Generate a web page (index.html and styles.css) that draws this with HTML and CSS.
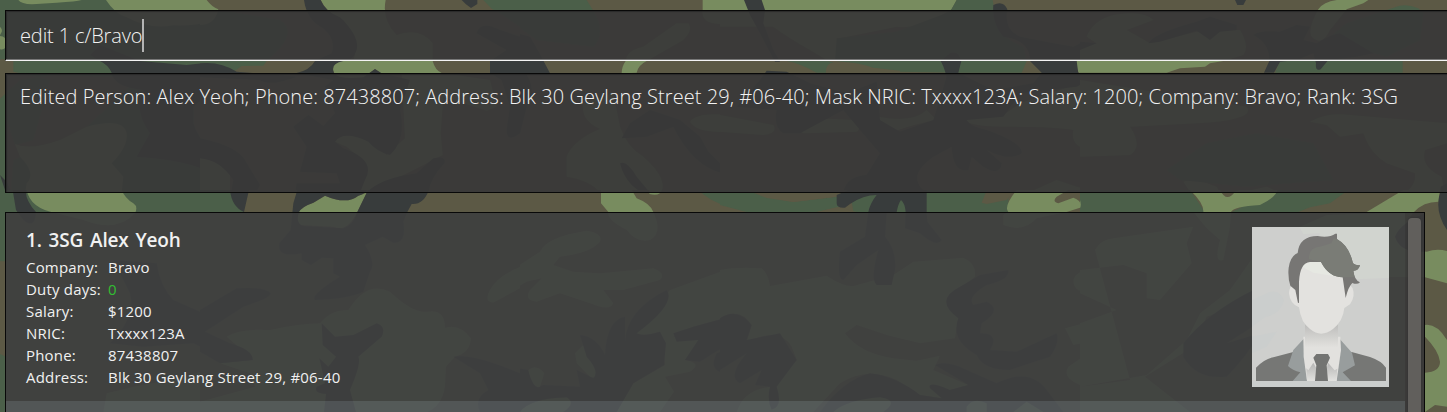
FILE: index.html
```html
<!DOCTYPE html>
<html lang="en">
<head>
<meta charset="utf-8">
<title>Personnel</title>
<link rel="stylesheet" href="styles.css">
</head>
<body>
<svg class="camo" width="1447" height="412" viewBox="0 0 1447 412" aria-hidden="true">
  <svg x="0" y="0" width="370" height="206" viewBox="0 0 1110 618">
    <rect class="g" width="1110" height="618"/>
    <path class="l" d="M55 0Q65 15 110 12L170 8Q230 5 245 0ZM0 80Q10 90 3 100L0 105ZM0 108Q18 108 20 130Q18 152 0 148ZM318 0Q345 42 380 52Q450 90 520 76Q650 80 655 30L640 0Z"/>
    <path class="b" d="M618 0Q640 15 652 30Q650 80 600 80Q620 150 800 183Q770 195 715 198L704 212Q500 220 330 230L160 225L60 240L0 296V178H40V215L150 240L100 420L45 435L0 300V618H30L40 480L240 400L410 240H580V370Q600 460 780 450L750 618H880L900 480L1110 470V240L940 183L915 130Q930 60 912 0Z"/>
    <path class="g" d="M0 300L18 300V618H0ZM45 183L300 183L340 218L160 222L42 215Z"/>
    <path class="l" d="M45 432Q90 452 180 420L260 380Q370 350 380 400Q385 440 335 490L370 530L365 578L390 618H95Q70 590 80 550Q110 520 60 470Z"/>
    <path class="d" d="M580 320V370Q600 450 720 480L780 560L740 618H700Q680 570 690 550Q600 480 410 470L450 400Q400 330 430 270Q340 260 335 218Q325 195 300 183L270 165L300 135L420 183L560 195L640 186L700 270Q620 280 580 320Z"/>
    <path class="g" d="M365 570H692L705 618H395Z"/>
    <path class="d" d="M0 525L20 545L45 600L48 618H90L80 580L15 570Z"/>
  </svg>
  <svg x="360" y="0" width="370" height="206" viewBox="0 0 1110 618">
    <rect class="b" width="1110" height="618"/>
    <path class="l" d="M1028 0H1110V70Q1020 80 1028 30ZM985 70Q1000 90 970 120L860 183Q835 195 830 218L785 220Q785 200 797 183Q800 150 850 140L950 70ZM720 387Q660 360 670 310L760 280L780 380Q800 440 850 470Q930 540 900 585L860 605L865 618H723V580Q690 540 620 530V470Q640 420 720 387ZM990 365Q1010 335 1110 345V395Q1010 400 990 365Z"/>
    <path class="g" d="M360 0H680L700 32Q740 100 700 140L530 120L420 40L390 30ZM1015 578H1110V618H1090Q1050 600 1015 578Z"/>
    <path class="d" d="M350 100Q370 60 400 80L510 110Q540 160 570 220L500 225Q530 270 500 320L480 400Q450 430 440 390L450 320Q380 330 370 280L420 240L390 218L388 183L440 150ZM785 415L810 370L870 330L960 360L1020 410L1045 455L1080 490L1090 520Q1000 500 940 380L860 410ZM780 490Q800 480 830 530L880 590Q800 570 780 490Z"/>
  </svg>
  <svg x="720" y="0" width="370" height="206" viewBox="0 0 1110 618">
    <rect class="b" width="1110" height="618"/>
    <path class="l" d="M0 0H710L695 28Q600 90 530 80L360 115L350 183H325L270 150Q200 110 160 80L0 80ZM0 345L160 375Q175 400 130 405L0 395ZM230 365Q240 350 400 360Q430 380 410 395L250 400Q225 385 230 365ZM475 350Q580 370 620 330L650 360Q590 370 520 395Q475 390 475 350ZM735 360L850 345L900 310L1110 240V450Q1050 440 1060 390Q1010 380 860 380Q750 380 735 360Z"/>
    <path class="g" d="M710 0H818L830 70Q850 120 910 140L920 183L905 218H720L540 215L460 205Q390 185 345 183L350 115L530 95L690 35ZM200 183H325L340 188Q320 195 318 218H290Q240 190 200 183ZM0 578H90L190 605L350 585L355 618H0ZM620 578H800L780 618H620Z"/>
    <path class="b" d="M330 190Q390 180 460 203L540 212V225H318Q315 200 330 190Z"/>
    <path class="l" d="M865 618Q870 590 925 578L1010 540L1070 560L1110 570V618H1060L1080 595L1020 600Q995 585 1000 610L1050 618ZM1110 183H1070Q1060 205 1080 220H1110Z"/>
    <path class="d" d="M72 0H125L135 30L130 70L160 150L180 185H165L120 100L90 45ZM820 15Q850 0 862 28Q850 90 900 110L1000 130L1060 140L1110 115V183H1070L1075 220Q1100 250 1070 260L900 280L850 350L740 360Q750 380 800 390Q910 430 905 460Q870 485 800 450L845 490Q840 530 790 500L755 470L745 510Q700 520 695 440L640 470Q570 520 600 560L620 580V618H550Q535 590 530 618H440Q450 590 470 584Q440 590 410 600Q380 615 355 618Q340 585 370 575Q380 530 440 525L480 460L420 390L370 330L240 400L190 400Q160 380 170 330L50 320L120 240L140 212L200 215L270 250L380 280L470 245L480 360L540 395L640 360L680 230Q670 195 662 183L690 160Q715 150 724 183L715 218L820 270L940 250L965 218L930 183Q930 120 850 110Q815 70 820 15Z"/>
  </svg>
  <svg x="1080" y="0" width="367" height="206" viewBox="0 0 1101 618">
    <rect class="b" width="1101" height="618"/>
    <path class="l" d="M715 28Q730 5 770 0H865L850 10L800 28L750 90Q730 130 710 120Q670 110 715 28ZM20 110Q40 60 100 45Q190 30 220 60L140 90L210 130L350 95L480 90Q510 140 490 165L430 183L390 190L375 200L300 205L260 218L0 218V140L50 130ZM0 240L500 320Q530 360 350 370L150 380Q190 440 150 465L0 470ZM690 365Q740 335 810 345L1101 370V430L1035 450Q1020 500 1085 530L1101 618H885Q900 605 960 590Q1010 560 1005 520L920 490Q870 460 850 400L780 410L740 375ZM310 545L340 535L410 560L420 580Q440 605 470 580L560 560L600 578Q580 618 550 618H355L340 590Z"/>
    <path class="g" d="M945 22Q975 8 1015 25L1030 40L1020 120L920 170L740 120L800 70ZM600 183H968V218H585ZM0 578H330L355 618H0ZM600 578H805L750 612L715 618H540L590 600ZM380 430L530 400L700 430L760 540L500 560L300 540L260 510Z"/>
    <path class="d" d="M465 0H498L490 15H472ZM205 130Q220 100 350 65L390 50L470 75L470 90L420 95L390 120L350 92L240 125ZM520 105Q540 90 600 95L650 75L690 80L670 120L710 130Q760 100 780 100L880 160L830 170L745 180L722 208Q705 215 708 190L700 160L650 180L600 185L582 218H552L568 183Q570 130 520 105ZM0 125L50 130L0 150ZM1075 618L1082 560L1101 550V618Z"/>
  </svg>
  <svg x="0" y="190" width="370" height="222" viewBox="0 0 1110 666">
    <rect class="b" width="1110" height="666"/>
    <path class="g" d="M0 0H745V66H0ZM0 66H18V214H0ZM0 492L18 500V666H0Z"/>
    <path class="l" d="M80 0H365Q375 25 400 40Q415 50 405 70Q350 130 250 90L170 70Q90 55 80 0ZM320 610L400 590L560 560L640 530V666H310Z"/>
    <path class="d" d="M38 0H78Q75 30 108 66Q105 120 70 90L48 60ZM340 210L470 220Q480 290 520 330L600 365L700 300H760V515H700L580 460L430 470L330 460Q410 380 390 310Z"/>
  </svg>
  <svg x="360" y="190" width="370" height="222" viewBox="0 0 1110 666">
    <rect class="b" width="1110" height="666"/>
    <path class="l" d="M723 0H815L830 25Q870 40 880 66Q910 130 870 150Q830 160 800 120Q740 90 745 66L723 40ZM868 0H906Q900 20 868 12ZM380 330Q390 280 440 250L540 185Q560 140 680 122Q730 130 720 155Q690 190 600 200L580 225L640 245L720 250L880 235Q920 250 900 270L790 300L730 300L760 340Q750 365 690 340L600 310L530 335Q490 330 510 300L545 265L500 275L400 335ZM480 666Q510 625 620 622Q650 640 610 666ZM645 490L670 465L715 540Q710 570 690 560L650 520ZM820 465Q810 440 850 390L930 300L1110 235V380L1000 410L940 440L1015 450L975 510Q1030 520 990 545L915 560L942 605L900 666H770L820 580L915 525L900 425L840 445Z"/>
    <path class="g" d="M1015 0H1110V52Q1050 35 1015 0Z"/>
    <path class="d" d="M280 500Q330 490 470 560L475 535L505 540Q520 600 550 585L660 590L650 540L700 565Q720 545 680 500L660 435Q710 440 735 495Q740 390 795 380L795 455Q800 360 920 300Q950 340 830 430Q850 440 900 425L918 460L912 525L820 580L770 666H695H610Q650 640 620 622Q510 625 480 666H360Q340 610 380 600ZM940 430L1000 410L1110 380V460L1060 490L1020 515L975 510L1015 450L950 455ZM1110 475V550Q1040 550 1070 490Z"/>
    <path class="l" d="M505 540Q530 520 553 550L540 590Q520 600 505 540Z"/>
  </svg>
  <svg x="720" y="190" width="370" height="222" viewBox="0 0 1110 666">
    <rect class="b" width="1110" height="666"/>
    <path class="g" d="M0 0H90L150 23L220 36L350 20L360 50L290 66H80L0 45ZM390 0H865V66H400Z"/>
    <path class="b" d="M80 0H355L350 20L220 36L140 24ZM800 0H885L860 30L800 42L785 38ZM290 66L350 52L410 66Z"/>
    <path class="l" d="M890 0H1045L1010 20Q995 35 1015 40L1060 23Q1090 35 1080 53L1040 66L950 85Q910 130 850 105L850 75L865 66Q850 50 890 0ZM0 240Q50 230 125 235Q145 250 150 288L320 257Q370 290 400 288L520 255L580 215L730 203Q770 220 765 260L680 330L715 385L705 445L600 460L500 435L410 405L375 430Q420 490 520 505L590 512L660 497L640 540L745 585L670 605L665 625L600 615L530 570Q440 530 360 580L280 666H50Q70 600 150 590L170 575L230 510L215 470Q180 410 80 455L95 405Q60 350 0 385ZM1060 270Q1070 240 1110 240V305Q1060 310 1060 270ZM1035 415L1110 395V455L1060 465ZM1110 485V595Q1020 570 1045 530Z"/>
    <path class="d" d="M350 15L385 0H620V66L622 95L665 150Q650 175 600 130L555 115L557 66Q555 40 543 30Q535 40 530 66L500 70L495 140Q530 180 525 240L515 285H470Q450 270 475 180L410 225L370 270Q350 270 360 185L435 140L445 66Q450 40 470 15Q430 15 390 42L375 53Q350 55 350 40ZM0 385Q50 350 95 405L80 450L180 430L230 510L170 590Q190 650 155 659Q140 630 150 590L105 585L125 540L60 580Q20 560 80 490L0 540ZM865 240Q870 270 800 285Q740 320 760 345L800 335Q850 360 785 400L780 430Q840 430 810 480L890 485L1010 430Q1020 460 990 500L930 520L870 540Q790 540 770 495Q690 450 715 385Q640 330 720 290L780 255ZM645 525Q680 510 740 540L830 580Q930 530 980 600L1030 666H300Q370 570 450 550Q530 560 600 615L665 625L630 595Q620 570 690 600L745 585Z"/>
    <path class="l" d="M340 666Q380 630 480 622Q540 630 490 666ZM740 650Q760 620 800 640V666H740ZM880 666L920 635L970 666Z"/>
  </svg>
  <svg x="1080" y="190" width="367" height="222" viewBox="0 0 1101 666">
    <rect class="b" width="1101" height="666"/>
    <path class="g" d="M0 0H330L375 66H0ZM590 0H805L750 40L690 52L655 66H455Z"/>
    <path class="l" d="M0 30Q5 45 0 55ZM330 0H420Q440 40 465 5L480 0H592Q590 20 540 45Q460 50 453 66L450 110L430 210Q400 220 420 150L380 115L340 66L370 66Q372 40 330 0ZM45 180Q60 150 100 145L340 110L320 160L335 220L240 330L200 325V250L130 225L0 240V310L110 360L0 400V590L200 555L320 450L360 370L450 300L520 200L700 140L660 110L740 75L1000 66L970 120L1000 180L1040 185Q1070 175 1101 183V280L1035 262L700 260L600 310L500 340L380 380L340 470L195 560L330 666H0V590L150 570ZM970 0H1080L1075 35Q1030 35 1002 66H860ZM1035 405Q1070 400 1101 450V650L1065 645L1035 666V548Q1080 545 1080 515Q1075 480 1035 440Z"/>
    <path class="d" d="M1083 0H1101V120Q1060 60 1083 0ZM310 460Q380 370 520 300Q610 300 610 340L550 390L440 460L540 430Q500 500 440 560Q350 570 310 500ZM945 140Q960 100 1035 70V185Q960 190 945 140Z"/>
  </svg>
  <svg x="200" y="0" width="320" height="206" viewBox="0 0 960 618">
    <rect class="b" width="960" height="618"/>
    <path class="g" d="M0 30H55L240 60Q300 100 200 183L190 197L125 198L105 212L0 190ZM850 0H960V80L900 40L875 26ZM0 570H90L95 618H0Z"/>
    <path class="l" d="M0 0H20Q35 20 55 28Q45 75 0 75ZM362 0H557Q545 60 590 105Q660 80 698 130V183Q705 210 725 219L870 240L890 320L860 332L730 290L722 400L728 465L660 500L580 540L500 580L480 618H325L375 588Q420 570 480 560Q520 500 440 440L405 425Q420 400 470 405L520 430L560 465L615 415L605 220H540L525 207L490 235L420 238Q390 215 400 183H460Q480 120 430 60Q380 40 362 0ZM0 475Q60 480 90 520L90 578H0Z"/>
    <path class="d" d="M312 0H362Q375 35 420 52Q480 110 470 150Q460 183 430 183Q390 190 402 219Q415 240 490 232L525 207L545 220L630 240L600 330Q620 420 570 465Q530 455 505 425Q430 390 405 425L430 445Q530 480 495 540L480 578L420 600Q390 585 372 590L328 618H280L290 550L420 550L410 520L300 515L320 440L280 380L325 345L370 378L405 340L375 260L400 240L290 219Q330 210 345 183L395 160Q410 120 370 85Q320 60 312 0ZM785 0H832L832 12L813 24Q795 12 785 0ZM830 100Q840 60 900 90L960 110V400Q920 430 920 390L930 320L905 240L870 219V183L920 150ZM0 190Q60 183 110 215L290 230Q210 260 180 240L0 232ZM0 415Q120 440 140 490L180 555L145 618H95Q90 590 100 540Q60 480 0 475ZM500 578Q540 535 650 520L700 475Q740 465 733 490Q690 535 685 578Q670 618 635 618H482Z"/>
  </svg>
  <svg x="200" y="190" width="320" height="222" viewBox="0 0 960 666">
    <rect class="b" width="960" height="666"/>
    <path class="g" d="M0 0H145L130 66H0Z"/>
    <path class="b" d="M145 0H292L276 66H132Z"/>
    <path class="l" d="M297 66Q305 50 340 38L375 17Q440 45 475 17L500 8L472 66Q440 130 400 110L300 105Q288 90 297 66ZM80 440Q120 415 210 420Q300 400 360 400Q390 360 445 360Q500 270 570 305Q640 370 680 365Q735 355 735 413Q780 400 813 445Q810 490 765 500L738 530L735 590Q725 650 680 666H0V635L165 590L150 550L60 520L160 510ZM960 230V295L880 338Q850 335 870 300Q890 260 960 230Z"/>
    <path class="d" d="M90 0H147L132 66Q95 50 90 0ZM292 0H501Q490 15 475 17Q440 45 375 17L340 38Q305 50 297 66Q285 100 310 108L430 115Q460 105 472 66L500 8L505 0H687Q670 45 635 42L622 66L610 95Q620 160 580 158L548 140L495 165Q530 220 510 245L490 305Q450 325 345 330Q330 315 420 260L400 250V205L365 203L333 225L305 210V190Q230 205 238 160L272 120L280 40ZM0 360L110 295Q200 290 212 310Q210 325 130 350L15 425L90 460Q160 480 158 510L60 520L0 485ZM365 400L405 440L460 435L530 400Q560 410 545 440L475 500Q485 520 450 600L468 666H372L378 612Q340 610 350 590L375 580L358 505L385 530L408 500L368 465ZM760 500Q820 490 960 550V666H840Q820 625 865 600L840 550Z"/>
  </svg>
</svg>
<main class="app">
  <section class="command"><span class="command-text">edit 1 c/Bravo</span><span class="caret"></span></section>
  <section class="result"><span class="result-text">Edited Person: Alex Yeoh; Phone: 87438807; Address: Blk 30 Geylang Street 29, #06-40; Mask NRIC: Txxxx123A; Salary: 1200; Company: Bravo; Rank: 3SG</span></section>
  <section class="list">
    <div class="cells">
      <article class="card">
        <div class="info">
          <h1 class="name">1. 3SG Alex Yeoh</h1>
          <dl class="fields">
            <dt>Company:</dt><dd>Bravo</dd>
            <dt>Duty days:</dt><dd class="duty">0</dd>
            <dt>Salary:</dt><dd>$1200</dd>
            <dt>NRIC:</dt><dd>Txxxx123A</dd>
            <dt>Phone:</dt><dd>87438807</dd>
            <dt>Address:</dt><dd>Blk 30 Geylang Street 29, #06-40</dd>
          </dl>
        </div>
        <svg class="photo" width="137" height="160" viewBox="36 21 411 480" role="img" aria-label="Portrait">
          <defs>
            <linearGradient id="neck" x1="0" y1="0" x2="0" y2="1"><stop offset="0" stop-color="#b9b9b7"/><stop offset="1" stop-color="#e2e1de"/></linearGradient>
            <linearGradient id="shirt" x1="0" y1="0" x2="0" y2="1"><stop offset="0" stop-color="#b5b5b4"/><stop offset="1" stop-color="#e2e2df"/></linearGradient>
          </defs>
          <rect x="36" y="21" width="411" height="480" fill="#cecfcd"/>
          <path d="M178 21H447V174L345 178L250 158L205 140L240 40L190 42Z" fill="#d1d4cf"/>
          <path d="M36 240L90 215Q120 210 132 240Q125 280 75 292L36 320ZM36 350L110 335L80 380L36 400ZM36 484H447V501H36Z" fill="#cbcecd"/>
          <path d="M48 483V443Q75 415 103 411L160 396L242 420L335 396L390 411Q425 423 438 443V483Z" fill="#767775"/>
          <path d="M190 358L160 390L144 438Q157 451 181 457L158 483H333L308 457L345 436L336 398L300 358Z" fill="#989d9d"/>
          <path d="M190 350H301L303 390L290 483H201L191 410Z" fill="#e2e1de"/>
          <path d="M195 305H294V382H195Z" fill="url(#neck)"/>
          <path d="M205 451L220 428L229 445L224 483H201L199 445ZM284 451L264 428L260 446L265 483H289L292 446Z" fill="url(#shirt)"/>
          <path d="M229 402H264L270 413L260 436L264 483H225L229 436L220 413Z" fill="#737472"/>
          <path d="M177 130H312V196Q325 185 338 205Q347 230 330 253L313 264Q309 304 279 327Q243 355 210 327Q183 309 177 262Q150 252 147 220Q149 190 166 200Z" fill="#e3e2df"/>
          <path d="M188 126H250L303 172L220 158L186 140Z" fill="#e6e8e2"/>
          <path d="M177 248L174 249L166 210L151 197Q143 174 146 143Q151 108 173 99Q178 48 233 48Q268 54 286 41H291V58Q327 77 339 130Q350 138 360 135Q356 153 340 152Q343 180 360 187Q352 195 337 189Q325 200 317 234L308 172Q267 172 243 126H210Q180 128 177 185Z" fill="#777674"/>
          <path d="M243 126L207 118Q204 82 245 79L274 70L281 55L291 57Q327 77 339 130Q350 138 360 135Q356 153 340 152L344 172H308Q267 172 243 126Z" fill="#7a7c76"/>
        </svg>
      </article>
      <div class="card-next"></div>
    </div>
    <div class="scroll"><div class="thumb"></div></div>
  </section>
</main>
</body>
</html>
```
FILE: styles.css
```css
* { box-sizing: border-box; }
body { margin: 0; width: 1447px; height: 412px; overflow: hidden; background: #4b5e49; font-family: "Open Sans", "Noto Sans", sans-serif; }
.camo { position: absolute; left: 0; top: 0; }
.g { fill: #4b5f49; }
.l { fill: #788c5f; }
.b { fill: #5c5945; }
.d { fill: #383c3c; }
.app { position: relative; display: flex; flex-direction: column; height: 412px; padding: 10px 0 0 5px; overflow: hidden; }
.command { display: flex; align-items: center; flex: none; height: 51px; margin-bottom: 12px; padding-left: 14px; background: rgba(56, 56, 56, .925); border: 1px solid #080808; border-right: 0; border-bottom: 1px solid #f4f4f4; box-shadow: inset 0 -1px #777, inset 1px 1px 1px #2b2b2b; }
.command-text, .result-text { color: #f3f3f3; font-weight: 300; font-size: 20px; line-height: 28px; white-space: pre; }
.command-text { letter-spacing: -.12px; }
.result-text { letter-spacing: .064px; }
.caret { width: 2px; height: 33px; background: #b4b4b4; }
.result { flex: none; height: 120px; margin-bottom: 19px; padding: 9px 0 0 14px; background: rgba(56, 56, 56, .925); border: 1px solid #080808; border-right: 0; box-shadow: inset 1px 1px 1px #2b2b2b; }
.list { display: flex; flex: none; width: 1420px; height: 205px; border: 1px solid #080808; }
.cells { display: flex; flex-direction: column; width: 1399px; }
.card { display: flex; justify-content: space-between; flex: none; height: 188px; padding: 14px 16px 0 20px; background: rgba(62, 63, 63, .92); color: #f1f1f1; }
.name { margin: -1px 0 0; height: 30px; font-size: 19px; line-height: 28px; font-weight: 600; letter-spacing: -.15px; word-spacing: 2px; white-space: pre; }
.fields { display: grid; grid-template-columns: 82px auto; grid-auto-rows: 22px; margin: 0; font-size: 15px; line-height: 22px; letter-spacing: .2px; white-space: nowrap; }
.fields dd { margin: 0; }
.fields .duty { color: #32bd32; }
.photo { display: block; flex: none; }
.card-next { height: 20px; background: rgba(81, 86, 88, .92); }
.scroll { width: 19px; padding: 5px 3px 0; background: rgba(56, 56, 56, .925); }
.thumb { height: 210px; border-radius: 4px; background: #615f5c; box-shadow: 0 0 2px #2e2e2e; }
```
